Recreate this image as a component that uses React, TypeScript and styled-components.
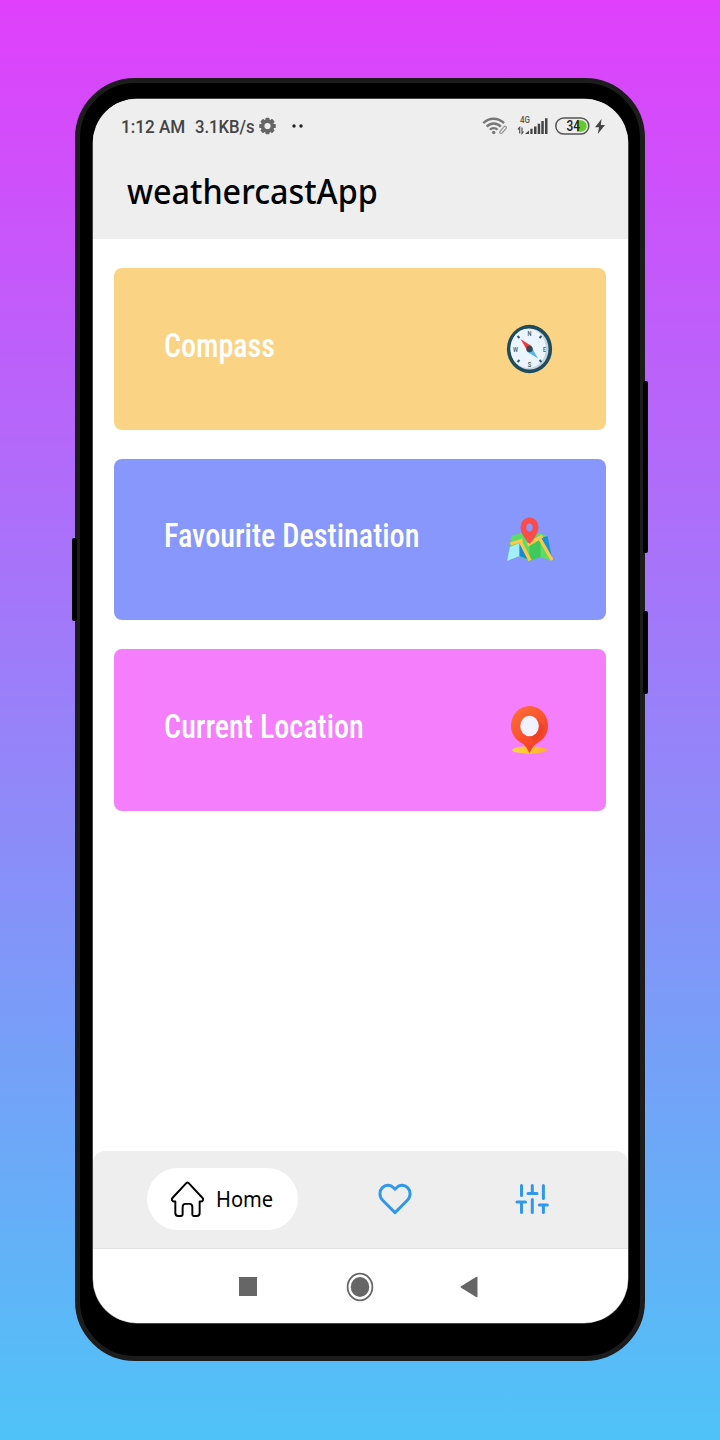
import React from "react";
import styled, { createGlobalStyle } from "styled-components";

const GlobalStyle = createGlobalStyle`
  * { box-sizing: border-box; }
  body { margin: 0; }
`;

const Backdrop = styled.main`
  width: 720px;
  height: 1440px;
  padding: 78px 75px 79px;
  overflow: hidden;
  background: linear-gradient(180deg, #e040fb 0%, #4fc3f7 100%);
`;

const Phone = styled.div`
  position: relative;
  width: 570px;
  height: 1283px;
  padding: 16px 12px 33px 12.5px;
  background: #000;
  border: 5px solid #1c1c1c;
  border-radius: 60px;
`;

const SideKey = styled.span<{ $side: "left" | "right"; $top: number; $height: number }>`
  position: absolute;
  ${(p) => p.$side}: -8px;
  top: ${(p) => p.$top}px;
  width: 5px;
  height: ${(p) => p.$height}px;
  background: #000;
  border-radius: 2px;
`;

const Screen = styled.div`
  display: flex;
  flex-direction: column;
  width: 535.5px;
  height: 1224px;
  overflow: hidden;
  background: #fff;
  border-radius: 44px;
  box-shadow: 0 0 0 0.5px #8a8a8a;
`;

const AppHeader = styled.header`
  height: 140px;
  background: #eee;
`;

const StatusBar = styled.div`
  display: flex;
  align-items: center;
  height: 54px;
  padding: 0 23px 0 28px;
`;

const FittedText = styled.span<{ $width: number; $scale: number }>`
  display: block;
  flex: none;
  width: ${(p) => p.$width}px;
  white-space: nowrap;
  transform: scaleX(${(p) => p.$scale});
  transform-origin: left center;
`;

const StatusText = styled(FittedText)`
  padding-top: 1px;
  font: 500 18px/24px Roboto, sans-serif;
  color: #444;
`;

const StatusIcons = styled.div`
  display: flex;
  align-items: center;
  margin-left: auto;
`;

const Title = styled(FittedText)`
  padding-top: 13px;
  margin-left: 34px;
  font: 500 35px/50px "Noto Sans", sans-serif;
  color: #000;
`;

const CardList = styled.section`
  display: flex;
  flex: 1;
  flex-direction: column;
  gap: 29px;
  padding: 29px 22px 0 21.5px;
`;

const Card = styled.article<{ $color: string }>`
  display: flex;
  align-items: center;
  justify-content: space-between;
  height: 161.5px;
  padding: 0 53px 0 50px;
  background: ${(p) => p.$color};
  border-radius: 8px;
`;

const CardLabel = styled(FittedText)`
  padding-bottom: 6px;
  font: 500 32.5px/40px Roboto, sans-serif;
  font-stretch: 75%;
  color: #fff;
`;

const TabBar = styled.nav`
  display: flex;
  align-items: center;
  height: 98px;
  padding: 0 77px 0 54.5px;
  background: #eee;
  border-bottom: 1px solid #e2e2e2;
  border-radius: 12px 12px 0 0;
`;

const HomeTab = styled.button`
  display: flex;
  align-items: center;
  gap: 11px;
  width: 151px;
  height: 62px;
  padding: 0 0 0 22px;
  color: #000;
  background: #fff;
  border: 0;
  border-radius: 31px;
`;

const TabLabel = styled(FittedText)`
  font: 400 21.5px/30px "Noto Sans", sans-serif;
  text-align: left;
`;

const IconTab = styled.button<{ $gap: number }>`
  display: flex;
  margin-left: ${(p) => p.$gap}px;
  padding: 0;
  background: none;
  border: 0;
`;

const SystemBar = styled.div`
  display: flex;
  align-items: center;
  height: 74.5px;
  padding: 2px 0 0 146px;
`;

const RecentsKey = styled.span`
  width: 18px;
  height: 19px;
  background: #666;
`;

const GearIcon = () => (
  <svg width="17" height="18" viewBox="-9 -9 18 18">
    <g fill="#666">
      {[0, 45, 90, 135].map((a) => (
        <rect key={a} x="-2.2" y="-8.8" width="4.4" height="17.6" rx="1" transform={`rotate(${a})`} />
      ))}
    </g>
    <circle r="5.2" fill="none" stroke="#666" strokeWidth="3.8" />
    <circle r="3.3" fill="#eee" />
  </svg>
);

const NotificationDots = () => (
  <svg width="14" height="6" viewBox="0 0 14 6">
    <circle cx="3" cy="3" r="1.7" fill="#222" />
    <circle cx="10" cy="3" r="1.7" fill="#222" />
  </svg>
);

const WifiIcon = () => (
  <svg width="25" height="18" viewBox="-.5 0 25 18" fill="none" stroke="#777" strokeWidth="2.4">
    <path d="M.8 6.1C6.500.2 15.500.2 21.600 6.100" />
    <path d="M4.200 9.600C8 5.400 14.500 5.400 18.300 9.600" />
    <path d="M7.400 12.800C9.500 10.500 13 10.500 15 12.800" />
    <circle cx="11.200" cy="15.500" r="1.700" fill="#777" stroke="none" />
    <path d="M17.500 14.500l3.800-4.700a1.400 1.400 0 0 1 2.200 1.800l-4.200 4.700a1.300 1.300 0 0 1-1.800-1.800z" stroke="#999" strokeWidth="1.300" />
  </svg>
);

const SignalIcon = () => (
  <svg width="31" height="20" viewBox="0 0 31 20">
    <text x="3" y="7.200" fontFamily="Roboto, sans-serif" fontWeight="500" fontSize="8.500" textLength="10" lengthAdjust="spacingAndGlyphs" fill="#555">4G</text>
    <path d="M2.700 17.500v-6L1 13.500M5 11.500v6l1.500-2" fill="none" stroke="#555" strokeWidth="1.200" />
    <path d="M8 18l4-3.500V18zM13.300 18v-5.200h2.300V18zM17 18v-7.500h2.500V18zM20.700 18V7.700h2.500V18zM24.300 18V5h2.500v13zM28 18V2.300h2.500V18z" fill="#444" />
  </svg>
);

const BatteryIcon = () => (
  <svg width="35" height="18" viewBox="0 0 35 18">
    <path d="M22 3.200h4a5.600 5.600 0 0 1 0 11.500h-4z" fill="#67c829" />
    <rect x=".8" y="1" width="33" height="16" rx="8" fill="none" stroke="#555" strokeWidth="1.500" />
    <text x="11.500" y="14" fontFamily="Roboto, sans-serif" fontWeight="500" fontSize="14.500" textLength="13.500" lengthAdjust="spacingAndGlyphs" fill="#222">34</text>
  </svg>
);

const BoltIcon = () => (
  <svg width="10" height="15" viewBox="0 0 10 15">
    <path d="M6.600 0L0 8.300h4L2.800 15 10 6H5.800z" fill="#444" />
  </svg>
);

const CompassIcon = () => (
  <svg width="48" height="50" viewBox="-.5 0 48 50">
    <ellipse cx="24" cy="25" rx="22.600" ry="24.200" fill="#1f4c5c" />
    <ellipse cx="24" cy="25" rx="19" ry="20.600" fill="#c6d4df" />
    <ellipse cx="22.700" cy="24.400" rx="17.700" ry="19.600" fill="#ecf4ff" />
    <g fontFamily="Roboto, sans-serif" fontWeight="500" fill="#315968" textAnchor="middle">
      <text x="24" y="11.800" fontSize="7.500" textLength="4" lengthAdjust="spacingAndGlyphs">N</text>
      <text x="24" y="43.200" fontSize="7.500" textLength="3.500" lengthAdjust="spacingAndGlyphs">S</text>
      <text x="10" y="27.500" fontSize="7" textLength="5" lengthAdjust="spacingAndGlyphs">W</text>
      <text x="39" y="27.500" fontSize="7" textLength="3" lengthAdjust="spacingAndGlyphs">E</text>
    </g>
    <path d="M12 12l2 2M34 14l2-2M12 38l2-2M34 36l2 2" stroke="#315968" strokeWidth="2" />
    <path d="M15 15l11 7-4 5z" fill="#f0383e" />
    <path d="M32.500 34.500L22 28l4-5z" fill="#54b5f3" />
    <circle cx="24" cy="25" r="3.200" fill="#3d454e" />
  </svg>
);

const MapIcon = () => (
  <svg width="48" height="46" viewBox="-.5 -1 48 46">
    <path d="M6 18.500l10-2.500 8 3 10-3 8 3 5 25-13-4-11 4-9-5-12.500 5z" fill="#5edb64" />
    <path d="M4.500 30l9.500-4v13L1.500 44z" fill="#a4eefc" />
    <path d="M14 25l11 18.500-11-4.500z" fill="#158bd5" />
    <path d="M24 27v17l11-4V21z" fill="#3fc85b" />
    <path d="M35 21l7-2 4.800 23z" fill="#198fdc" />
    <path d="M5 27l12-4M15 25l9.500 18.500M22 28l15-9M34 21l12.500 22" fill="none" stroke="#fdc74b" strokeWidth="3.300" />
    <path d="M24 27S15 18 15 10.300a9 9.800 0 0 1 18 0C33 18 24 27 24 27z" fill="#fb4b4b" />
    <ellipse cx="24" cy="10.500" rx="3.200" ry="4" fill="#8797fb" />
  </svg>
);

const PinIcon = () => (
  <svg width="48" height="50" viewBox="-.5 .5 48 50">
    <defs>
      <linearGradient id="pin" x1="0" y1="0" x2=".7" y2="1">
        <stop offset="0" stopColor="#ff7137" />
        <stop offset="1" stopColor="#f33c26" />
      </linearGradient>
      <linearGradient id="puddle">
        <stop offset="0" stopColor="#ffd83b" />
        <stop offset="1" stopColor="#fcae31" />
      </linearGradient>
    </defs>
    <ellipse cx="24" cy="45.500" rx="17.500" ry="3.700" fill="url(#puddle)" />
    <path d="M24 48.500c-2-3.500-4-8-8-10C9.500 35 5.500 28.500 5.500 21.500a18.500 20 0 0 1 37 0c0 7-4 13.500-10.500 17-4 2-6 6.500-8 10z" fill="url(#pin)" />
    <path d="M31 14l8 8c-1 6-4 10-8 13l-2 1-9-6z" fill="#df3826" opacity=".4" />
    <ellipse cx="24" cy="21.500" rx="9.300" ry="10.300" fill="#f1f1ff" />
  </svg>
);

const HomeIcon = () => (
  <svg width="36" height="40" viewBox="-1 -.5 37 41" fill="none" stroke="currentColor" strokeWidth="2" strokeLinejoin="round">
    <path d="M17 3.500q1-1 2 0l14.500 15.500c1.200 1.300.500 3.500-1.500 3.500h-1.500v12q0 3-3 3h-3q-1.500 0-1.500-1.500v-7.500q0-3.500-3-3.500h-4q-3 0-3 3.500V36q0 1.500-1.500 1.500h-3q-3 0-3-3v-12H4c-2 0-2.700-2.200-1.500-3.500z" />
  </svg>
);

const HeartIcon = () => (
  <svg width="34" height="34" viewBox="-.5 -.5 35 35">
    <path d="M17 31L4.500 18.500C.3 14.300.8 8.500 4 5.300c3.500-3.500 8.500-3 11.500.200L17 7l1.500-1.500c3-3.200 8-3.700 11.500-.200 3.200 3.200 3.700 9-.500 13.200z" fill="none" stroke="#2f98ed" strokeWidth="3" strokeLinejoin="round" />
  </svg>
);

const SlidersIcon = () => (
  <svg width="34" height="32" viewBox="0 0 34 32">
    <path d="M6.500 2.500v10M2 19h8.500M6.500 19v10.500M17.300 2.500v8M13 10.500h9M17.300 16.500v13M28.400 2.500v13M24.300 22h8M28.400 22v7.500" fill="none" stroke="#2f98ed" strokeWidth="3" strokeLinecap="round" />
  </svg>
);

const Spacer = styled.span<{ $size: number }>`
  flex: none;
  width: ${(p) => p.$size}px;
`;

const HomeKey = () => (
  <svg width="28" height="30" viewBox="0 0 28 30">
    <ellipse cx="14" cy="15" rx="12.400" ry="13.400" fill="none" stroke="#666" strokeWidth="1.800" />
    <ellipse cx="14" cy="15" rx="9.300" ry="10" fill="#666" />
  </svg>
);

const BackKey = () => (
  <svg width="18" height="22" viewBox="0 0 18 22">
    <path d="M1 10.300L16.500.8q1-.5 1 .7v19q0 1.200-1 .7L1 11.700q-1-.7 0-1.400z" fill="#666" />
  </svg>
);

const cards = [
  { label: "Compass", color: "#fad385", width: 110, scale: 0.924, Icon: CompassIcon },
  { label: "Favourite Destination", color: "#8797fb", width: 255, scale: 0.93, Icon: MapIcon },
  { label: "Current Location", color: "#f47efc", width: 200, scale: 0.928, Icon: PinIcon },
];

export default function App() {
  return (
    <>
      <GlobalStyle />
      <Backdrop>
        <Phone>
          <SideKey $side="left" $top={455} $height={83} />
          <SideKey $side="right" $top={298} $height={172} />
          <SideKey $side="right" $top={528} $height={83} />
          <Screen>
            <AppHeader>
              <StatusBar>
                <StatusText $width={74} $scale={0.95}>1:12 AM</StatusText>
                <StatusText $width={64.5} $scale={0.925}>3.1KB/s</StatusText>
                <GearIcon />
                <Spacer $size={15} />
                <NotificationDots />
                <StatusIcons>
                  <WifiIcon />
                  <Spacer $size={10.5} />
                  <SignalIcon />
                  <Spacer $size={7} />
                  <BatteryIcon />
                  <Spacer $size={5} />
                  <BoltIcon />
                </StatusIcons>
              </StatusBar>
              <Title $width={250} $scale={0.922}>weathercastApp</Title>
            </AppHeader>
            <CardList>
              {cards.map(({ label, color, width, scale, Icon }) => (
                <Card key={label} $color={color}>
                  <CardLabel $width={width} $scale={scale}>{label}</CardLabel>
                  <Icon />
                </Card>
              ))}
            </CardList>
            <TabBar>
              <HomeTab>
                <HomeIcon />
                <TabLabel $width={57} $scale={0.935}>Home</TabLabel>
              </HomeTab>
              <IconTab $gap={80} aria-label="Favourites"><HeartIcon /></IconTab>
              <IconTab $gap={103} aria-label="Settings"><SlidersIcon /></IconTab>
            </TabBar>
            <SystemBar>
              <RecentsKey />
              <Spacer $size={89} />
              <HomeKey />
              <Spacer $size={86} />
              <BackKey />
            </SystemBar>
          </Screen>
        </Phone>
      </Backdrop>
    </>
  );
}
